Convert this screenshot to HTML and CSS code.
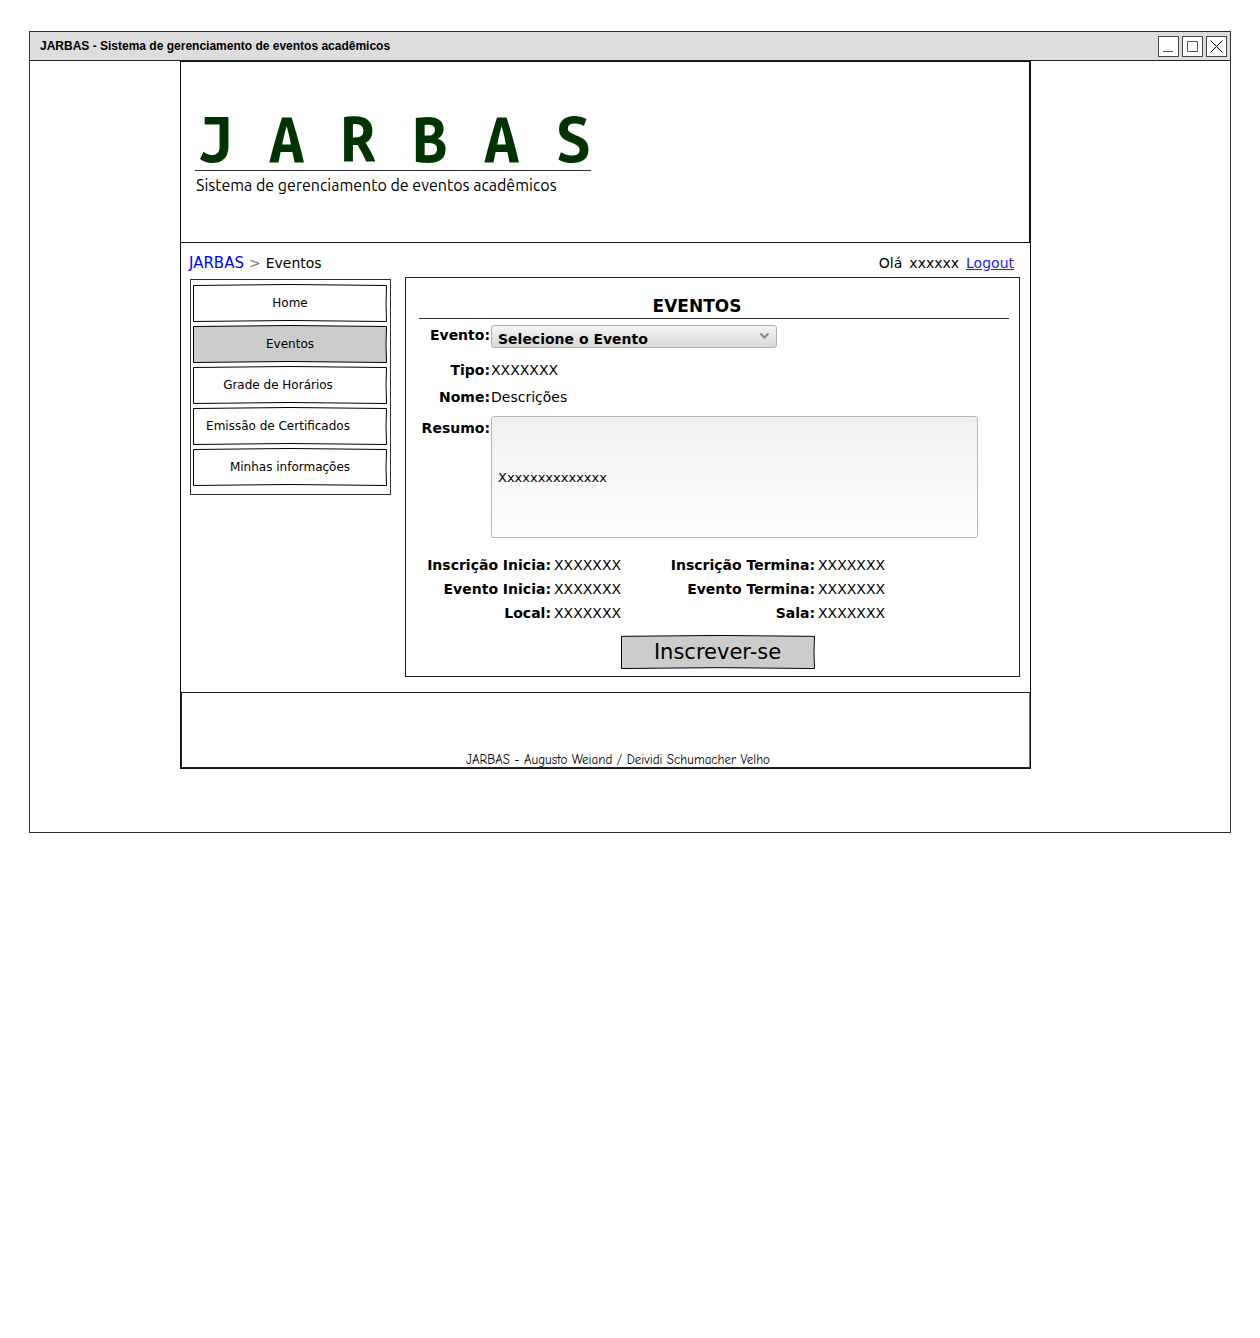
FILE: index.html
```html
<!DOCTYPE html>
<html lang="pt-BR">
<head>
<meta charset="utf-8">
<meta name="viewport" content="width=device-width, initial-scale=1">
<title>JARBAS - Eventos</title>
<link rel="stylesheet" href="styles.css">
</head>
<body>
<div class="window">
  <div class="titlebar">
    <span class="titlebar-text">JARBAS - Sistema de gerenciamento de eventos acadêmicos</span>
    <div class="controls">
      <button class="control" type="button" aria-label="Minimizar"><svg width="19" height="19" viewBox="0 0 19 19"><path d="M4 14.500H14"/></svg></button>
      <button class="control" type="button" aria-label="Maximizar"><svg width="19" height="19" viewBox="0 0 19 19"><path d="M4.500 4.500H14.500V14.500H4.500Z"/></svg></button>
      <button class="control control-close" type="button" aria-label="Fechar"><svg width="19" height="19" viewBox="0 0 19 19"><path d="M3.500 3.500L15.500 15.500M15.500 3.500L3.500 15.500"/></svg></button>
    </div>
  </div>

  <div class="desktop">
    <div class="page">
      <header class="header">
        <div class="brand">
          <h1 class="logo">J A R B A S</h1>
          <p class="tagline">Sistema de gerenciamento de eventos acadêmicos</p>
        </div>
      </header>

      <div class="topline">
        <nav class="breadcrumb" aria-label="Caminho">
          <a class="crumb-link" href="#">JARBAS</a>
          <span class="crumb-sep">&gt;</span>
          <span>Eventos</span>
        </nav>
        <div class="user">
          <span>Olá</span>
          <span>xxxxxx</span>
          <a class="logout" href="#">Logout</a>
        </div>
      </div>

      <div class="content">
        <nav class="menu" aria-label="Menu">
          <a class="menu-item sketch" href="#">Home</a>
          <a class="menu-item menu-item-active sketch" href="#">Eventos</a>
          <a class="menu-item menu-item-long sketch" href="#">Grade de Horários</a>
          <a class="menu-item menu-item-long sketch" href="#">Emissão de Certificados</a>
          <a class="menu-item sketch" href="#">Minhas informações</a>
        </nav>

        <main class="panel">
          <h2 class="panel-title">EVENTOS</h2>
          <form class="form">
            <div class="fields">
              <label class="label" for="evento">Evento:</label>
              <div class="select-box">
                <select class="select" id="evento"><option>Selecione o Evento</option></select>
                <svg class="arrow" width="11" height="8" viewBox="0 0 11 8"><path d="M1.500 1.500L5.500 5.500L9.500 1.500"/></svg>
              </div>
              <span class="label">Tipo:</span>
              <span class="value">XXXXXXX</span>
              <span class="label">Nome:</span>
              <span class="value">Descrições</span>
              <label class="label label-top" for="resumo">Resumo:</label>
              <textarea class="summary" id="resumo">Xxxxxxxxxxxxxx</textarea>
            </div>

            <div class="details">
              <span class="label">Inscrição Inicia:</span><span class="value">XXXXXXX</span>
              <span class="label">Inscrição Termina:</span><span class="value">XXXXXXX</span>
              <span class="label">Evento Inicia:</span><span class="value">XXXXXXX</span>
              <span class="label">Evento Termina:</span><span class="value">XXXXXXX</span>
              <span class="label">Local:</span><span class="value">XXXXXXX</span>
              <span class="label">Sala:</span><span class="value">XXXXXXX</span>
            </div>

            <div class="actions">
              <button class="submit sketch" type="button">Inscrever-se</button>
            </div>
          </form>
        </main>
      </div>

      <footer class="footer">JARBAS - Augusto Weiand / Deividi Schumacher Velho</footer>
    </div>
  </div>
</div>
</body>
</html>
```

FILE: styles.css
```css
* {
  box-sizing: border-box;
}

body {
  margin: 0;
  padding: 31px 29px;
  background: #fff;
  color: #000;
  font-family: Verdana, "DejaVu Sans", sans-serif;
  font-size: 14px;
  line-height: 20px;
}

button,
select,
textarea {
  margin: 0;
  color: inherit;
  font-family: inherit;
}

/* Hand-drawn outline: slightly bowed edges that stretch with the box */
.sketch {
  --fill: #fff;
  border: 1px solid transparent;
  background:
    url("data:image/svg+xml,%3Csvg xmlns='http://www.w3.org/2000/svg' viewBox='0 0 194 38' preserveAspectRatio='none'%3E%3Cpath d='M.5 1.5Q97 -.5 193.5 1.5Q192.500 19 193.5 37.5Q97 35.5 .5 37.5Z' fill='none' stroke='%23000' vector-effect='non-scaling-stroke'/%3E%3C/svg%3E") border-box 0 0 / 100% 100% no-repeat,
    linear-gradient(var(--fill), var(--fill)) padding-box;
}

/* Window frame */
.window {
  border: 1px solid #333;
}

.titlebar {
  display: flex;
  align-items: center;
  justify-content: space-between;
  height: 29px;
  padding: 0 3px 0 10px;
  border-bottom: 1px solid #222;
  background: #ddd;
  font: bold 12px/16px "Liberation Sans", Arial, sans-serif;
}

.controls {
  display: flex;
  gap: 3px;
}

.control {
  width: 21px;
  height: 21px;
  padding: 0;
  border: 1px solid #444;
  background: #fff;
}

.control svg {
  display: block;
}

.control path {
  fill: none;
  stroke: #555;
}

.control-close path {
  stroke: #000;
}

.desktop {
  padding: 0 199px 63px 150px;
}

.page {
  border: 1px solid #111;
  border-top: 0;
}

/* Header */
.header {
  height: 182px;
  padding: 44px 14px 0;
  border: solid #111;
  border-width: 1px 1px 1px 0;
}

.brand {
  width: 396px;
}

.logo {
  margin: 0;
  padding-left: 2px;
  border-bottom: 1px solid #333;
  color: #030;
  font: bold 64px/64px "Ubuntu Mono", "DejaVu Sans Mono", monospace;
  white-space: nowrap;
}

.tagline {
  margin: 0;
  padding: 4px 0 0 1px;
  font: 16px/20px Ubuntu, "Noto Sans", sans-serif;
  white-space: nowrap;
}

/* Breadcrumb and user */
.topline {
  display: flex;
  justify-content: space-between;
  padding: 10px 16px 4px 8px;
}

.breadcrumb {
  display: flex;
  gap: 5px;
}

.user {
  display: flex;
  gap: 7px;
}

.crumb-link {
  color: #00f;
  font-size: 15px;
  text-decoration: none;
}

.crumb-sep {
  color: #777;
}

.logout {
  color: #22f;
}

/* Main area */
.content {
  display: flex;
  align-items: flex-start;
  gap: 14px;
  padding: 0 10px 15px 9px;
}

.menu {
  display: flex;
  flex: 0 0 201px;
  flex-direction: column;
  gap: 3px;
  margin-top: 2px;
  padding: 4px 3px 8px 2px;
  border: 1px solid #333;
}

.menu-item {
  height: 38px;
  color: #000;
  font-size: 12px;
  line-height: 37px;
  text-align: center;
  text-decoration: none;
}

.menu-item-active {
  --fill: #ccc;
}

.menu-item-long {
  padding-right: 24px;
}

.panel {
  flex: 1;
  min-width: 0;
  padding: 17px 10px 7px 13px;
  border: 1px solid #222;
}

.panel-title {
  margin: 0;
  padding: 0 34px 1px 0;
  border-bottom: 1px solid #333;
  font-size: 17px;
  line-height: 22px;
  text-align: center;
}

.form {
  padding-top: 6px;
}

.fields {
  display: grid;
  grid-template-columns: 71px 1fr;
  column-gap: 1px;
  grid-template-rows: 35px 27px 29px auto;
  padding-right: 31px;
}

.label {
  font-weight: bold;
  text-align: right;
  white-space: nowrap;
}

.fields .label-top {
  padding-top: 2px;
}

.select-box {
  position: relative;
  width: 286px;
}

.select {
  display: block;
  width: 100%;
  height: 23px;
  padding: 4px 6px 0;
  border: 1px solid #b0b0b0;
  border-radius: 3px;
  appearance: none;
  background: linear-gradient(#f4f4f4, #d8d8d8);
  font-size: 14px;
  font-weight: bold;
}

.arrow {
  position: absolute;
  top: 7px;
  right: 7px;
  pointer-events: none;
}

.arrow path {
  fill: none;
  stroke: #888;
  stroke-width: 2;
}

.summary {
  display: block;
  width: 100%;
  height: 122px;
  padding: 51px 6px 0;
  border: 1px solid #b8b8b8;
  border-radius: 3px;
  resize: none;
  background: linear-gradient(#f0f0f0, #fff);
  font-size: 13px;
  line-height: 20px;
}

.details {
  display: grid;
  grid-template-columns: 132px 118px 146px 1fr;
  grid-auto-rows: 24px;
  padding-top: 17px;
}

.details .value {
  padding-left: 3px;
}

.actions {
  padding: 8px 0 0 7px;
}

.submit {
  --fill: #ccc;
  display: block;
  width: 194px;
  height: 34px;
  margin: 0 auto;
  padding: 0;
  font-size: 21px;
}

/* Footer */
.footer {
  padding: 59px 0 0 25px;
  border: 1px solid #222;
  border-right-color: #777;
  font: 13px/15px "Comic Sans MS", "Comic Neue", "Open Sans", sans-serif;
  text-align: center;
}
```
